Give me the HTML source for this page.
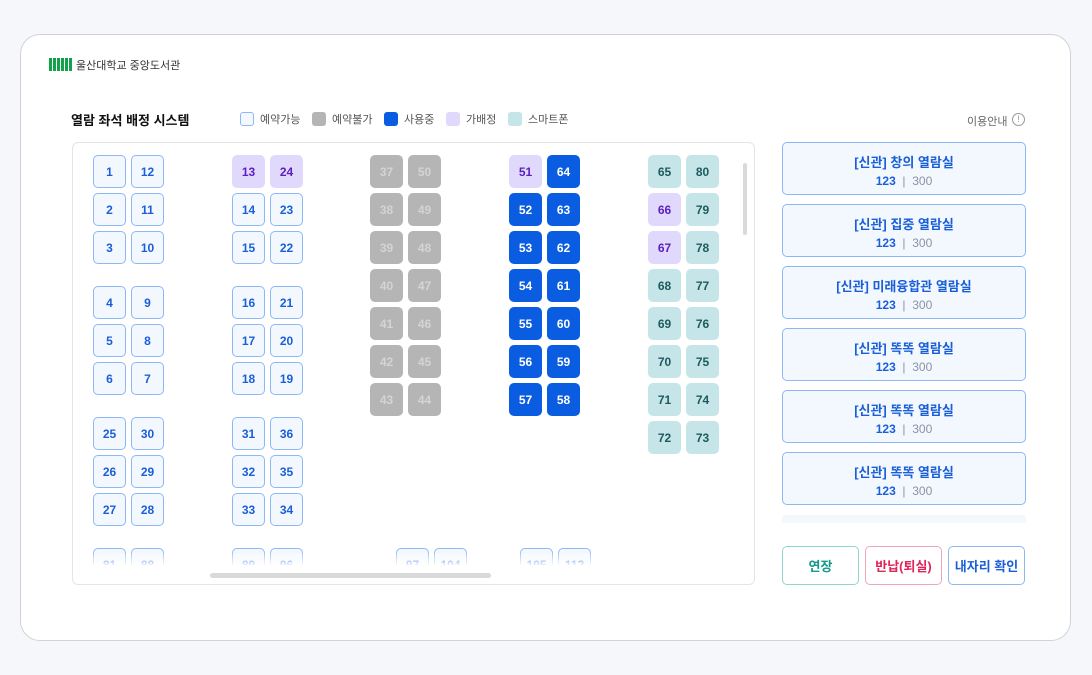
<!DOCTYPE html>
<html><head><meta charset="utf-8"><style>
*{box-sizing:border-box;margin:0;padding:0}
body{width:1092px;height:675px;background:#f6f7fb;position:relative;font-family:"Liberation Sans","Noto Sans CJK KR",sans-serif;overflow:hidden}
.card{position:absolute;left:20px;top:34px;width:1051px;height:607px;background:#fff;border:1px solid #cfd2d8;border-radius:20px}
.a{position:absolute}
.s{position:absolute;width:33px;height:33px;border-radius:5px;font-size:12px;font-weight:bold;display:flex;align-items:center;justify-content:center}
.v{background:#f3f8ff;border:1.5px solid #8db8f5;color:#1a5fd8}
.p{background:#e1d9fb;color:#5b1fc0}
.g{background:#b5b5b5;color:#d4d4d4}
.b{background:#0a5ce0;color:#fff}
.t{background:#c6e5e8;color:#1e5a5e}
.lg{position:absolute;top:112px;width:14px;height:14px;border-radius:3px}
.lt{position:absolute;top:111px;font-size:11px;color:#555}
.room{position:absolute;left:782px;width:244px;height:53px;border:1.5px solid #8db8f5;border-radius:5px;background:#f3f8ff;text-align:center}
.room .n{font-size:13px;color:#1a5fd8;font-weight:bold;margin-top:9px}
.room .c{font-size:12px;margin-top:3px;color:#8a93a3}
.room .c b{color:#1a5fd8}
.btn{position:absolute;top:546px;width:77px;height:39px;border-radius:5px;border:1.5px solid;font-size:13px;font-weight:bold;display:flex;align-items:center;justify-content:center;background:#fff}
</style></head><body>
<div class="card"></div>
<div class="a" style="left:49px;top:58px;display:flex;gap:1.5px"><i style="width:2.5px;height:13px;background:#13a14b"></i><i style="width:2.5px;height:13px;background:#13a14b"></i><i style="width:2.5px;height:13px;background:#13a14b"></i><i style="width:2.5px;height:13px;background:#13a14b"></i><i style="width:2.5px;height:13px;background:#13a14b"></i><i style="width:2.5px;height:13px;background:#13a14b"></i></div>
<div class="a" style="left:76px;top:57px;font-size:11px;color:#333">울산대학교 중앙도서관</div>
<div class="a" style="left:71px;top:110px;font-size:13px;font-weight:bold;color:#111">열람 좌석 배정 시스템</div>
<div class="lg" style="left:240px;border:1.5px solid #8db8f5;background:#f3f8ff"></div><div class="lt" style="left:260px">예약가능</div>
<div class="lg" style="left:312px;background:#b5b5b5"></div><div class="lt" style="left:332px">예약불가</div>
<div class="lg" style="left:384px;background:#0a5ce0"></div><div class="lt" style="left:404px">사용중</div>
<div class="lg" style="left:446px;background:#e1d9fb"></div><div class="lt" style="left:466px">가배정</div>
<div class="lg" style="left:508px;background:#c6e5e8"></div><div class="lt" style="left:528px">스마트폰</div>
<div class="a" style="left:967px;top:113px;font-size:11px;color:#666">이용안내</div>
<div class="a" style="left:1012px;top:113px;width:13px;height:13px;border:1px solid #999;border-radius:50%;font-size:9px;color:#999;text-align:center;line-height:11px">!</div>

<div class="a" style="left:72px;top:142px;width:683px;height:443px;border:1px solid #e3e5e8;border-radius:6px;background:#fff"></div>
<div class="a" style="left:73px;top:143px;width:681px;height:422px;overflow:hidden">
<div class="a" style="left:-73px;top:-143px;width:1092px;height:675px">
<div class="s v" style="left:93px;top:155px">1</div><div class="s v" style="left:131px;top:155px">12</div>
<div class="s v" style="left:93px;top:193px">2</div><div class="s v" style="left:131px;top:193px">11</div>
<div class="s v" style="left:93px;top:231px">3</div><div class="s v" style="left:131px;top:231px">10</div>
<div class="s v" style="left:93px;top:286px">4</div><div class="s v" style="left:131px;top:286px">9</div>
<div class="s v" style="left:93px;top:324px">5</div><div class="s v" style="left:131px;top:324px">8</div>
<div class="s v" style="left:93px;top:362px">6</div><div class="s v" style="left:131px;top:362px">7</div>
<div class="s v" style="left:93px;top:417px">25</div><div class="s v" style="left:131px;top:417px">30</div>
<div class="s v" style="left:93px;top:455px">26</div><div class="s v" style="left:131px;top:455px">29</div>
<div class="s v" style="left:93px;top:493px">27</div><div class="s v" style="left:131px;top:493px">28</div>
<div class="s v" style="left:93px;top:548px">81</div><div class="s v" style="left:131px;top:548px">88</div>

<div class="s p" style="left:232px;top:155px">13</div><div class="s p" style="left:270px;top:155px">24</div>
<div class="s v" style="left:232px;top:193px">14</div><div class="s v" style="left:270px;top:193px">23</div>
<div class="s v" style="left:232px;top:231px">15</div><div class="s v" style="left:270px;top:231px">22</div>
<div class="s v" style="left:232px;top:286px">16</div><div class="s v" style="left:270px;top:286px">21</div>
<div class="s v" style="left:232px;top:324px">17</div><div class="s v" style="left:270px;top:324px">20</div>
<div class="s v" style="left:232px;top:362px">18</div><div class="s v" style="left:270px;top:362px">19</div>
<div class="s v" style="left:232px;top:417px">31</div><div class="s v" style="left:270px;top:417px">36</div>
<div class="s v" style="left:232px;top:455px">32</div><div class="s v" style="left:270px;top:455px">35</div>
<div class="s v" style="left:232px;top:493px">33</div><div class="s v" style="left:270px;top:493px">34</div>
<div class="s v" style="left:232px;top:548px">89</div><div class="s v" style="left:270px;top:548px">96</div>

<div class="s g" style="left:370px;top:155px">37</div><div class="s g" style="left:408px;top:155px">50</div>
<div class="s g" style="left:370px;top:193px">38</div><div class="s g" style="left:408px;top:193px">49</div>
<div class="s g" style="left:370px;top:231px">39</div><div class="s g" style="left:408px;top:231px">48</div>
<div class="s g" style="left:370px;top:269px">40</div><div class="s g" style="left:408px;top:269px">47</div>
<div class="s g" style="left:370px;top:307px">41</div><div class="s g" style="left:408px;top:307px">46</div>
<div class="s g" style="left:370px;top:345px">42</div><div class="s g" style="left:408px;top:345px">45</div>
<div class="s g" style="left:370px;top:383px">43</div><div class="s g" style="left:408px;top:383px">44</div>
<div class="s v" style="left:396px;top:548px">97</div><div class="s v" style="left:434px;top:548px">104</div>

<div class="s p" style="left:509px;top:155px">51</div><div class="s b" style="left:547px;top:155px">64</div>
<div class="s b" style="left:509px;top:193px">52</div><div class="s b" style="left:547px;top:193px">63</div>
<div class="s b" style="left:509px;top:231px">53</div><div class="s b" style="left:547px;top:231px">62</div>
<div class="s b" style="left:509px;top:269px">54</div><div class="s b" style="left:547px;top:269px">61</div>
<div class="s b" style="left:509px;top:307px">55</div><div class="s b" style="left:547px;top:307px">60</div>
<div class="s b" style="left:509px;top:345px">56</div><div class="s b" style="left:547px;top:345px">59</div>
<div class="s b" style="left:509px;top:383px">57</div><div class="s b" style="left:547px;top:383px">58</div>
<div class="s v" style="left:520px;top:548px">105</div><div class="s v" style="left:558px;top:548px">112</div>

<div class="s t" style="left:648px;top:155px">65</div><div class="s t" style="left:686px;top:155px">80</div>
<div class="s p" style="left:648px;top:193px">66</div><div class="s t" style="left:686px;top:193px">79</div>
<div class="s p" style="left:648px;top:231px">67</div><div class="s t" style="left:686px;top:231px">78</div>
<div class="s t" style="left:648px;top:269px">68</div><div class="s t" style="left:686px;top:269px">77</div>
<div class="s t" style="left:648px;top:307px">69</div><div class="s t" style="left:686px;top:307px">76</div>
<div class="s t" style="left:648px;top:345px">70</div><div class="s t" style="left:686px;top:345px">75</div>
<div class="s t" style="left:648px;top:383px">71</div><div class="s t" style="left:686px;top:383px">74</div>
<div class="s t" style="left:648px;top:421px">72</div><div class="s t" style="left:686px;top:421px">73</div>
</div>
<div class="a" style="left:0;top:410px;width:681px;height:12px;background:linear-gradient(rgba(255,255,255,0.2),rgba(255,255,255,0.9))"></div>
</div>
<div class="a" style="left:210px;top:573px;width:281px;height:5px;border-radius:3px;background:#d9d9d9"></div>
<div class="a" style="left:743px;top:163px;width:4px;height:72px;border-radius:2px;background:#d9d9d9"></div>

<div class="room" style="top:142px"><div class="n">[신관] 창의 열람실</div><div class="c"><b>123</b> &nbsp;|&nbsp; 300</div></div>
<div class="room" style="top:204px"><div class="n">[신관] 집중 열람실</div><div class="c"><b>123</b> &nbsp;|&nbsp; 300</div></div>
<div class="room" style="top:266px"><div class="n">[신관] 미래융합관 열람실</div><div class="c"><b>123</b> &nbsp;|&nbsp; 300</div></div>
<div class="room" style="top:328px"><div class="n">[신관] 똑똑 열람실</div><div class="c"><b>123</b> &nbsp;|&nbsp; 300</div></div>
<div class="room" style="top:390px"><div class="n">[신관] 똑똑 열람실</div><div class="c"><b>123</b> &nbsp;|&nbsp; 300</div></div>
<div class="room" style="top:452px"><div class="n">[신관] 똑똑 열람실</div><div class="c"><b>123</b> &nbsp;|&nbsp; 300</div></div>
<div class="a" style="left:782px;top:515px;width:244px;height:8px;background:#f3f8ff;border-radius:4px 4px 0 0"></div>

<div class="btn" style="left:782px;border-color:#8fd6cc;color:#14998a">연장</div>
<div class="btn" style="left:865px;border-color:#f3a5b8;color:#e0245a">반납(퇴실)</div>
<div class="btn" style="left:948px;border-color:#8db8f5;color:#1a5fd8">내자리 확인</div>
</body></html>
